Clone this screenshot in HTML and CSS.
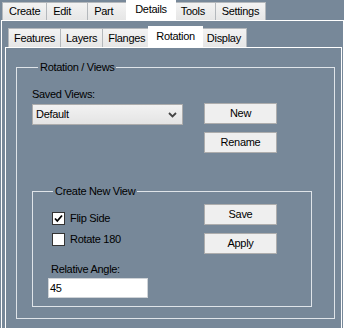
FILE: index.html
```html
<!DOCTYPE html>
<html>
<head>
    <meta charset="UTF-8">
    <title>Details - Rotation</title>
    <link rel="stylesheet" href="styles.css">
</head>
<body>
    <div class="window">
        <div class="tabstrip top-tabs">
            <div class="tab">Create</div>
            <div class="tab">Edit</div>
            <div class="tab">Part</div>
            <div class="tab active">Details</div>
            <div class="tab">Tools</div>
            <div class="tab">Settings</div>
        </div>
        <div class="page outer-page">
            <div class="inner-control">
                <div class="tabstrip sub-tabs">
                    <div class="tab">Features</div>
                    <div class="tab">Layers</div>
                    <div class="tab">Flanges</div>
                    <div class="tab active">Rotation</div>
                    <div class="tab">Display</div>
                </div>
                <div class="page inner-page">
                    <fieldset class="group views-group">
                        <legend>Rotation / Views</legend>
                        <div class="views-row">
                            <div class="field">
                                <div class="label">Saved Views:</div>
                                <div class="combo">
                                    <span>Default</span>
                                    <svg class="chevron" width="9" height="6" viewBox="0 0 9 6">
                                        <path d="M1 1 L4.5 4.5 L8 1" fill="none" stroke="#444" stroke-width="1.8"/>
                                    </svg>
                                </div>
                            </div>
                            <div class="buttons">
                                <div class="btn">New</div>
                                <div class="btn">Rename</div>
                            </div>
                        </div>
                        <fieldset class="group create-group">
                            <legend>Create New View</legend>
                            <div class="create-row">
                                <div class="options">
                                    <div class="check">
                                        <span class="box">
                                            <svg width="11" height="11" viewBox="0 0 11 11">
                                                <path d="M2 5.5 L4.3 8 L9 2.5" fill="none" stroke="#000" stroke-width="1.8"/>
                                            </svg>
                                        </span>
                                        Flip Side
                                    </div>
                                    <div class="check">
                                        <span class="box"></span>
                                        Rotate 180
                                    </div>
                                    <div class="label angle-label">Relative Angle:</div>
                                    <div class="textbox">45</div>
                                </div>
                                <div class="buttons">
                                    <div class="btn">Save</div>
                                    <div class="btn">Apply</div>
                                </div>
                            </div>
                        </fieldset>
                    </fieldset>
                </div>
            </div>
        </div>
    </div>
</body>
</html>
```

FILE: styles.css
```css
html, body {
    margin: 0;
    height: 328px;
    overflow: hidden;
}
body {
    background-color: #778899;
    font-family: "Liberation Sans", Arial, sans-serif;
    font-size: 11px;
    line-height: 13px;
    letter-spacing: -0.3px;
    color: #000;
}
.window {
    display: flex;
    flex-direction: column;
    height: 328px;
}

/* tabs */
.tabstrip {
    display: flex;
    align-items: flex-end;
}
.tab {
    position: relative;
    box-sizing: border-box;
    min-width: 42px;
    padding: 2px 6px 0;
    margin-right: -1px;
    background: linear-gradient(#f3f3f3, #e6e6e6);
    border: 1px solid #b4b8bc;
    border-bottom: none;
    white-space: nowrap;
}
.tab.active {
    z-index: 1;
    margin: 0 -2px 0 -2px;
    padding: 2px 8px 0;
    background: #fff;
    border-color: #fff;
}
.top-tabs {
    height: 20px;
    padding-left: 2px;
}
.top-tabs .tab {
    height: 18px;
}
.top-tabs .tab.active {
    height: 21px;
    margin-bottom: -1px;
}
.sub-tabs {
    height: 21px;
    margin-top: 5px;
    padding-left: 3px;
}
.sub-tabs .tab {
    height: 19px;
    padding: 3px 5px 0;
}
.sub-tabs .tab.active {
    height: 22px;
    margin-bottom: -1px;
    padding: 3px 7px 0;
}

/* pages */
.page {
    flex: 1;
    border: 1px solid #fff;
    border-bottom: none;
}
.outer-page {
    display: flex;
    flex-direction: column;
    margin-left: 1px;
}
.inner-control {
    flex: 1;
    display: flex;
    flex-direction: column;
    margin: 0 1px 0 3px;
}

/* group boxes */
.group {
    margin: 0;
    padding: 0;
    border: 1px solid #dfe4e9;
}
.group legend {
    margin-left: 6px;
    padding: 0 2px;
}
.views-group {
    margin: 13px 6px 0 10px;
    padding: 0 0 11px 15px;
}
.views-row {
    display: flex;
    gap: 21px;
    margin-top: 14px;
}
.field {
    width: 151px;
}
.label {
    height: 13px;
}
.combo {
    box-sizing: border-box;
    display: flex;
    align-items: center;
    justify-content: space-between;
    height: 21px;
    margin-top: 3px;
    padding: 0 5px 0 3px;
    background: linear-gradient(#f2f2f2, #e4e4e4);
    border: 1px solid #acacac;
}
.buttons {
    display: flex;
    flex-direction: column;
    gap: 8px;
}
.views-row .buttons {
    margin-top: 15px;
}
.btn {
    box-sizing: border-box;
    width: 73px;
    height: 21px;
    line-height: 19px;
    text-align: center;
    background: #efefef;
    border: 1px solid #adadad;
}

.create-group {
    width: 280px;
    box-sizing: border-box;
    margin-top: 32px;
    padding: 0 0 8px 15px;
}
.create-group legend {
    margin-left: 5px;
}
.create-row {
    display: flex;
    margin-top: 6px;
}
.options {
    width: 100px;
    padding-top: 8px;
}
.check {
    display: flex;
    align-items: center;
    gap: 5px;
    height: 13px;
    margin: 0 0 8px 4px;
}
.box {
    box-sizing: border-box;
    display: flex;
    align-items: center;
    justify-content: center;
    width: 13px;
    height: 13px;
    background: #fff;
    border: 1px solid #333;
}
.angle-label {
    margin: 17px 0 0 3px;
}
.textbox {
    box-sizing: border-box;
    height: 20px;
    margin-top: 2px;
    padding: 3px 0 0 1px;
    background: #fff;
    border: 1px solid #cfd3d7;
}
.create-row .buttons {
    margin-left: 56px;
}
```
